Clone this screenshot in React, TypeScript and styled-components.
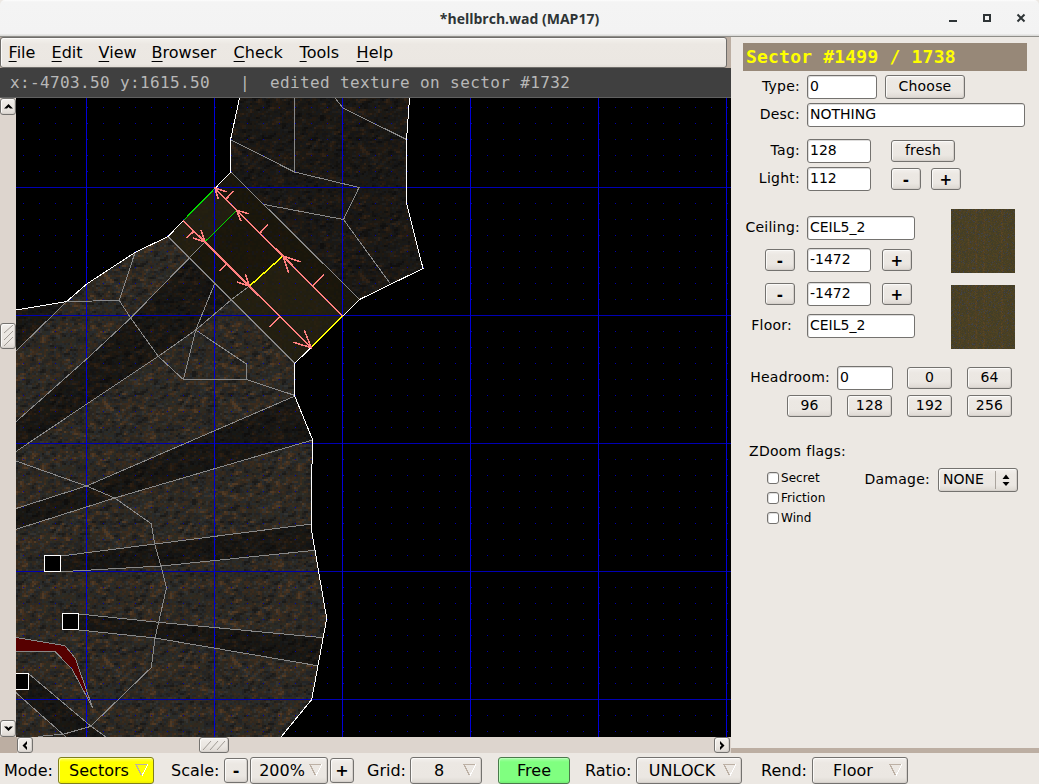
import React from 'react';
import styled, { createGlobalStyle } from 'styled-components';

const GlobalStyle = createGlobalStyle`
  * { box-sizing: border-box; }
  body { margin: 0; background: #ece8e3; overflow: hidden; }
  button, input { font: inherit; color: inherit; }
`;

const SANS = '"DejaVu Sans", sans-serif';
const MONO = '"DejaVu Sans Mono", monospace';

/* ---------- window frame ---------- */

const Window = styled.div`
  width: 1039px;
  height: 784px;
  display: flex;
  flex-direction: column;
  background: #ece8e3;
  color: #000;
  font-family: ${SANS};
`;

const TitleBar = styled.header`
  position: relative;
  height: 37px;
  flex: none;
  display: flex;
  align-items: center;
  justify-content: center;
  background: linear-gradient(#fdfdfd 0, #f4f4f4 2px, #f3f3f3 34px, #dcdcda 35px);
  border: 1px solid #8f8e89;
  border-width: 0 0 1px;
  border-radius: 5px 5px 0 0;
  color: #2e3436;
  font: bold 14px "Open Sans", "Noto Sans", sans-serif;
  padding-top: 1px;
`;

const WindowControls = styled.svg`
  position: absolute;
  right: 10px;
  top: 8px;
`;

const Main = styled.main`
  display: flex;
  height: 716px;
  flex: none;
`;

const Editor = styled.section`
  width: 731px;
  display: flex;
  flex-direction: column;
  background: #bcaea2;
`;

const MenuBar = styled.nav`
  width: 727px;
  height: 31px;
  display: flex;
  align-items: center;
  padding-left: 7.6px;
  font-size: 16px;
  background: linear-gradient(#f4f1ed, #ece8e3 6px, #ebe7e2 26px, #e2ddd7);
  border: 1px solid #6f6d6a;
  border-radius: 3px;
  box-shadow: inset 1px 1px 0 #fbfaf8;
`;

const MenuItem = styled.span<{ $w: number }>`
  width: ${(p) => p.$w}px;
  line-height: 20px;
  &::first-letter {
    text-decoration: underline;
    text-decoration-thickness: 1px;
    text-underline-offset: 3px;
  }
`;

const StatusLine = styled.div`
  height: 30px;
  padding-left: 10px;
  font: 16px/29px ${MONO};
  letter-spacing: 0.37px;
  white-space: pre;
  color: #b8b8b8;
  background: #404040;
  border-bottom: 1px solid #606060;
`;

const MapRow = styled.div`
  display: flex;
  height: 639px;
`;

const bevel = `
  border: 1px solid #74726f;
  border-radius: 3px;
  background: linear-gradient(#f3f0ed, #ece8e3 5px, #ebe7e2 calc(100% - 6px), #ddd8d2);
  box-shadow: inset 1px 1px 0 #fbfaf8, inset -1px -1px 0 #d5d0cb;
`;

const ScrollBar = styled.div<{ $vertical?: boolean }>`
  display: flex;
  flex: ${(p) => (p.$vertical ? 'none' : '1')};
  flex-direction: ${(p) => (p.$vertical ? 'column' : 'row')};
  ${(p) => (p.$vertical ? 'width: 16px;' : 'height: 16px;')}
  background: #ddd5ce;
`;

const ScrollPart = styled.div<{ $w: number; $h: number; $gap?: string }>`
  ${bevel}
  width: ${(p) => p.$w}px;
  height: ${(p) => p.$h}px;
  margin: ${(p) => p.$gap ?? '0'};
  flex: none;
  display: flex;
  align-items: center;
  justify-content: center;
  svg { display: block; }
`;

const HScrollRow = styled.div`
  display: flex;
  padding-left: 17px;
  height: 16px;
`;

/* ---------- side panel ---------- */

const Panel = styled.aside`
  width: 308px;
  height: 716px;
  padding: 6px 12px 0;
  border-bottom: 5px solid #bcaea2;
  font-size: 14px;
`;

const PanelTitle = styled.h1`
  margin: 0;
  height: 28px;
  padding-left: 3px;
  background: #978878;
  color: #ffff00;
  font: bold 18px/27px ${MONO};
  letter-spacing: 0.2px;
`;

const Row = styled.div<{ $top?: number }>`
  display: flex;
  align-items: center;
  height: 24px;
  margin-top: ${(p) => p.$top ?? 4}px;
`;

const Label = styled.label<{ $w: number; $right?: number }>`
  width: ${(p) => p.$w}px;
  margin-right: ${(p) => p.$right ?? 7}px;
  flex: none;
  display: flex;
  justify-content: flex-end;
  white-space: nowrap;
  letter-spacing: 0.25px;
  height: 24px;
  line-height: 22px;
`;

const Field = styled.input<{ $w: number }>`
  width: ${(p) => p.$w}px;
  height: 24px;
  flex: none;
  padding: 0 2px 2px;
  outline: none;
  background: #fff;
  border: 1px solid #74726f;
  border-radius: 3px;
  box-shadow: inset 1px 1px 0 #dedddc;
`;

const Button = styled.button<{ $w: number; $left?: number; $tall?: boolean; $heavy?: boolean }>`
  ${bevel}
  width: ${(p) => p.$w}px;
  height: ${(p) => (p.$tall ? 24 : 22)}px;
  margin-left: ${(p) => p.$left ?? 0}px;
  flex: none;
  padding: 0 0 2px 0;
  line-height: 18px;
  letter-spacing: 0.2px;
  font-weight: ${(p) => (p.$heavy ? 700 : 400)};
  ${(p) => (p.$heavy ? 'font-size: 15px; padding: 1px 0 0;' : '')}
`;

const Surfaces = styled.div`
  display: flex;
  justify-content: space-between;
  margin-top: 18px;
  padding-right: 12px;
`;

const SurfaceFields = styled.div`
  padding-top: 7px;
`;

const Swatches = styled.div`
  display: flex;
  flex-direction: column;
  gap: 12px;
  svg { display: block; }
`;

const Flags = styled.div`
  display: flex;
  margin-top: 4px;
  padding-left: 24px;
`;

const FlagList = styled.div`
  width: 97px;
  font-size: 12px;
  letter-spacing: 0.05px;
`;

const Flag = styled.label`
  display: flex;
  align-items: center;
  gap: 2px;
  height: 20px;
  line-height: 18px;
`;

const CheckBox = styled.span`
  width: 12px;
  height: 12px;
  background: #fff;
  border: 1px solid #74726f;
  border-radius: 3px;
  box-shadow: inset 1px 1px 0 #dedddc;
`;

const Select = styled.div`
  ${bevel}
  width: 80px;
  height: 24px;
  display: flex;
  align-items: center;
  padding: 0 7px 2px 4px;
  justify-content: space-between;
`;

const SelectArrows = styled.span`
  display: flex;
  height: 18px;
  padding-left: 6px;
  border-left: 1px solid #aaa49d;
  margin-top: 2px;
  svg { display: block; }
`;

/* ---------- bottom bar ---------- */

const BottomBar = styled.footer`
  display: flex;
  align-items: center;
  height: 31px;
  flex: none;
  padding: 4px 0 0 4px;
  font-size: 16px;
`;

const BarLabel = styled.span<{ $w: number }>`
  width: ${(p) => p.$w}px;
  flex: none;
  white-space: nowrap;
`;

const BarButton = styled.button<{ $w: number; $right?: number; $tone?: 'yellow' | 'green'; $menu?: boolean; $small?: boolean }>`
  ${bevel}
  position: relative;
  width: ${(p) => p.$w}px;
  height: ${(p) => (p.$small ? 25 : 27)}px;
  margin-right: ${(p) => p.$right ?? 0}px;
  flex: none;
  padding: 0 ${(p) => (p.$menu ? 14 : 0)}px 1px 0;
  font-weight: ${(p) => (p.$small ? 700 : 400)};
  ${(p) => p.$tone === 'yellow' && 'background: linear-gradient(#ffff60, #ffff00 4px, #ffff00 22px, #eeee00); border-color: #80801c; box-shadow: inset 1px 1px 0 #ffff90;'}
  ${(p) => p.$tone === 'green' && 'background: linear-gradient(#a8ffa8, #80ff80 4px, #80ff80 22px, #74ee74); border-color: #4a7a4a; box-shadow: inset 1px 1px 0 #b8ffb8;'}
`;

const Drop = styled.svg`
  position: absolute;
  right: 4px;
  top: 5px;
`;

const DropMark = () => (
  <Drop width="14" height="14" viewBox="0 0 14 14" fill="none" shapeRendering="crispEdges">
    <path d="M6.5 12.5L1 1.5H13" stroke="#bcb0a4" />
    <path d="M13 1.5L7 12.5" stroke="#fff" />
  </Drop>
);

/* ---------- procedural flats ---------- */

function makeRandom(seed: number) {
  let s = seed;
  return () => {
    s = (s + 0x6d2b79f5) | 0;
    let t = Math.imul(s ^ (s >>> 15), 1 | s);
    t = (t + Math.imul(t ^ (t >>> 7), 61 | t)) ^ t;
    return ((t ^ (t >>> 14)) >>> 0) / 4294967296;
  };
}

type Layer = { color: string; d: string };

function toLayers(palette: string[], size: number, pick: (x: number, y: number) => number): Layer[] {
  const cells = palette.map(() => '');
  for (let y = 0; y < size; y++) {
    for (let x = 0; x < size; x++) {
      const i = Math.max(0, Math.min(palette.length - 1, pick(x, y)));
      cells[i] += `M${x} ${y}h1v1h-1z`;
    }
  }
  return palette.map((color, i) => ({ color, d: cells[i] }));
}

const rockLayers = (() => {
  const size = 64;
  const rnd = makeRandom(17);
  const noise = Array.from({ length: size * size }, rnd);
  const hue = Array.from({ length: size * size }, rnd);
  const at = (g: number[], x: number, y: number) => g[((y + size) % size) * size + ((x + size) % size)];
  const palette = ['#1b1a18', '#211f1c', '#232425', '#292520', '#282b2c', '#31281e', '#2c2b23', '#3a2b1d', '#343330', '#44311f', '#503a25'];
  return toLayers(palette, size, (x, y) => {
    const v =
      at(noise, x, y) * 0.34 +
      at(noise, x - 1, y) * 0.24 +
      at(noise, x + 1, y - 1) * 0.16 +
      at(noise, x + 1, y) * 0.14 +
      at(noise, x, y - 1) * 0.12;
    return Math.round((v - 0.5) * 18 + 4.9 + (at(hue, x, y) - 0.5) * 2.4);
  });
})();

const ceilLayers = (() => {
  const rnd = makeRandom(52);
  const palette = ['#3c3c36', '#433e26', '#483f22', '#4b4122', '#4e4424', '#514022', '#5b4624', '#41424a'];
  return toLayers(palette, 64, (x) => {
    const r = rnd();
    const streak = [8, 17, 24, 25, 32, 33, 50, 51].includes(x);
    if (r < 0.06) return 0;
    if (r < 0.13) return 7;
    if (streak && r < 0.75) return r < 0.35 ? 6 : 5;
    return 1 + Math.floor(rnd() * 4.6);
  });
})();

const Texels = ({ layers }: { layers: Layer[] }) => (
  <>
    {layers.map((l) => (
      <path key={l.color} d={l.d} fill={l.color} />
    ))}
  </>
);

const Swatch = () => (
  <svg width="64" height="64" viewBox="0 0 64 64" shapeRendering="crispEdges">
    <Texels layers={ceilLayers} />
  </svg>
);

/* ---------- map view ---------- */

const CAVE = '16,310 66.7,301.5 86.7,284 135,252.5 168,236.5 295,363.5 295.5,395.5 312.5,439.5 311.5,530 326.7,618.5 311.7,699.5 281,737 16,737';
const NORTH_ROOM = '239.5,98 231,140 231,172 359.5,299.5 423,268.5 407,203 406.5,140 409.5,98';
const CORRIDOR = '168,236.5 231,172 359.5,299.5 295,363.5';

const SHADOWS = [
  '16,310 66.7,301.5 16,351',
  '16,421.7 86.7,359 130.7,318 189,258.3 231,300 195.7,330 86.7,404 16,451.5',
  '295,396 86.5,486 16,508.5 16,529.3 114.7,498 312.5,440',
  '61,556 155,544 311.5,524 315,550.3 161,566 61,571.7',
  '79,614 158.7,622.3 323,637.7 317.5,665.7 155,638 79,630',
  '29,674 91,726.3 106,737 66,737 16,692.7',
];

const TWO_SIDED = [
  '294.5,98 294.5,171.7',
  '231,140 294.5,172 359,187.5 343.5,219.5 264,204.5',
  '343.5,219.5 390,283.3',
  '335,98 343,108 407,139.7',
  '231,172 359.5,299.5',
  '168,236.5 295,363.5',
  '205,241.7 189,258.3 130.7,318 86.7,359 16,421.7',
  '249.5,286 231,300 195.7,330 158.3,356.3 86.7,404 16,451.5',
  '214.5,284 195.7,330 183.3,379.5',
  '195.7,330 246.5,364 246.5,379.5 183.3,379.5',
  '246.5,379.5 295,395.5',
  '135,252.5 119.3,300.5 66.7,301.5 16,351',
  '119.3,300.5 130.7,318 158.3,356.3 183.3,379.5',
  '16,461 86.5,486 114.7,498 151.3,523.7 154.7,544 161,566 166.5,588 158.7,622 155,638 151.3,667.5 91,726',
  '295,396 86.5,486 16,508.5',
  '312.5,440 114.7,498 16,529.3',
  '61,556 155,544 311.5,524',
  '61,571.7 161,566 315,550.3',
  '79,614 158.7,622.3 323,637.7',
  '79,630 155,638 317.5,665.7',
  '29,674 91,726.3 106,737',
  '16,692.7 66,737',
  '38,736.5 64,734 91,726.3',
  '16,637.5 65,645.7 75.3,658.3 92.5,707.5 72,669 55,651.5 16,651.5',
];

const WALLS = [
  '16,310 66.7,301.5 86.7,284 135,252.5 168,236.5 183,221',
  '215,188.4 231,172 230.5,140 239.5,98',
  '409.5,98 406.5,140 406.5,203 423,268.5 359.5,299.5 342.5,316.3',
  '311.3,347.4 294.5,363.5 294.5,395.5 312.5,439.5 311.5,490 311.5,530 326.7,618.5 311.7,699.5 281,737',
];

const ARROWS = [
  'M342.5 316L283 256M300.7 262L283 256L288.7 273.3M312.7 285.7L323.7 274.7',
  'M283 256L236.7 210.3M248.7 213.7L236.7 210.3L241 221.3M260 233L268 224.7',
  'M236.7 210.3L215 188M226.7 191.7L215 188L218.3 199.3M226.3 198.7L233.7 191',
  'M183 220.3L205 242M193.3 238L205 242L201 230.3M186.7 238L193.7 231.3',
  'M205 242L249.3 286.3M237.3 282L249.3 286.3L245.3 274.3M226.7 263.7L219.3 271.3',
  'M249.3 286.3L311.3 347.7M293.3 342.3L311.3 347.7L304.3 330.3M279.3 317.3L269.3 327.3',
];

const range = (from: number, to: number, step: number) => {
  const out: number[] = [];
  for (let v = from; v < to; v += step) out.push(v);
  return out;
};

const MapView = () => (
  <svg width="715" height="639" viewBox="16 98 715 639" shapeRendering="crispEdges">
    <defs>
      <pattern id="rock" width="64" height="64" patternUnits="userSpaceOnUse" patternTransform="translate(86 187) scale(2)">
        <Texels layers={rockLayers} />
      </pattern>
      <pattern id="ceil" width="64" height="64" patternUnits="userSpaceOnUse" patternTransform="translate(86 187) scale(2)">
        <Texels layers={ceilLayers} />
      </pattern>
      <pattern id="dots" x="23" y="107" width="16" height="16" patternUnits="userSpaceOnUse">
        <rect width="1" height="1" fill="#0000b0" />
      </pattern>
    </defs>
    <rect x="16" y="98" width="715" height="639" fill="#000" />
    <polygon points={CAVE} fill="url(#rock)" />
    <polygon points={NORTH_ROOM} fill="url(#rock)" />
    <polygon points={NORTH_ROOM} fill="#000" fillOpacity="0.4" />
    {SHADOWS.map((s) => (
      <polygon key={s} points={s} fill="#000" fillOpacity="0.44" />
    ))}
    <polygon points={CORRIDOR} fill="url(#ceil)" />
    <polygon points={CORRIDOR} fill="#050300" fillOpacity="0.68" />
    <polygon points="168,236.5 215,188 237,210 189,258.3" fill="#ffe9a0" fillOpacity="0.04" />
    <polygon points="231,300 249,286 283,256 342.5,316 295,363.5" fill="#ffe9a0" fillOpacity="0.04" />
    <polygon points="16,637.5 65,645.7 75.3,658.3 92.5,707.5 72,669 55,651.5 16,651.5" fill="#560000" />
    <rect x="16" y="98" width="715" height="639" fill="url(#dots)" />
    {range(187, 737, 128).map((y) => (
      <rect key={y} x="16" y={y} width="715" height="1" fill="#0000b4" />
    ))}
    {range(86, 731, 128).map((x) => (
      <rect key={x} x={x} y="98" width="1" height="639" fill="#0000d8" />
    ))}
    <g fill="none" stroke="#888">
      {TWO_SIDED.map((p) => (
        <polyline key={p} points={p} />
      ))}
    </g>
    <g fill="none" stroke="#fff">
      {WALLS.map((p) => (
        <polyline key={p} points={p} />
      ))}
    </g>
    <g fill="#000" stroke="#fff">
      <rect x="44.5" y="555.5" width="16" height="16" />
      <rect x="62.5" y="613.5" width="16" height="16" />
      <path d="M16 673.5H28.5V689.5H16" />
    </g>
    <path d="M183 220.8L215 188.3M205 241.7L237 210" stroke="#00dd00" />
    <path d="M249.5 286L283 256M311.3 347.6L342.5 316.2" stroke="#ffff00" strokeWidth="1.5" />
    <g fill="none" stroke="#ff8080" strokeWidth="1.55">
      {ARROWS.map((d) => (
        <path key={d} d={d} />
      ))}
    </g>
  </svg>
);

const Chevron = ({ d }: { d: string }) => (
  <svg width="9" height="9" viewBox="0 0 9 9">
    <path d={d} fill="#000" />
  </svg>
);

const MENUS: [string, number][] = [
  ['File', 43],
  ['Edit', 47],
  ['View', 53],
  ['Browser', 82],
  ['Check', 66],
  ['Tools', 57],
  ['Help', 60],
];

export default function App() {
  return (
    <Window>
      <GlobalStyle />
      <TitleBar>
        *hellbrch.wad (MAP17)
        <WindowControls width="84" height="20" viewBox="945 8 84 20" fill="none" stroke="#2e3436" strokeWidth="2">
          <path d="M949 21H957" />
          <rect x="984" y="15" width="6" height="6" />
          <path d="M1017.5 14.5L1024.5 21.5M1024.5 14.5L1017.5 21.5" />
        </WindowControls>
      </TitleBar>
      <Main>
        <Editor>
          <MenuBar>
            {MENUS.map(([name, width]) => (
              <MenuItem key={name} $w={width}>{name}</MenuItem>
            ))}
          </MenuBar>
          <StatusLine>{'x:-4703.50 y:1615.50   |  edited texture on sector #1732'}</StatusLine>
          <MapRow>
            <ScrollBar $vertical>
              <ScrollPart $w={16} $h={17}>
                <Chevron d="M4.5 2L9 6.5H6L4.5 5L3 6.5H0Z" />
              </ScrollPart>
              <ScrollPart $w={16} $h={26} $gap="208px 0 371px">
                <svg width="12" height="22" viewBox="0 0 12 22" stroke="#a09b95">
                  <path d="M2 8L11 0M2 15L11 6M2 21L11 12" />
                </svg>
              </ScrollPart>
              <ScrollPart $w={16} $h={17}>
                <Chevron d="M4.5 7L9 2.5H6L4.5 4L3 2.5H0Z" />
              </ScrollPart>
            </ScrollBar>
            <MapView />
          </MapRow>
          <HScrollRow>
            <ScrollBar>
              <ScrollPart $w={16} $h={16}>
                <Chevron d="M1.5 4.5L6 0V3L4.5 4.5L6 6V9Z" />
              </ScrollPart>
              <ScrollPart $w={30} $h={16} $gap="0 485px 0 166px">
                <svg width="24" height="11" viewBox="0 0 24 11" stroke="#a09b95">
                  <path d="M1 10L9 1M8 10L16 1M15 10L23 1" />
                </svg>
              </ScrollPart>
              <ScrollPart $w={16} $h={16}>
                <Chevron d="M6.5 4.5L2 0V3L3.5 4.5L2 6V9Z" />
              </ScrollPart>
            </ScrollBar>
          </HScrollRow>
        </Editor>

        <Panel>
          <PanelTitle>Sector #1499 / 1738</PanelTitle>
          <Row>
            <Label $w={57}>Type:</Label>
            <Field $w={70} defaultValue="0" />
            <Button $w={80} $left={8} $tall>Choose</Button>
          </Row>
          <Row>
            <Label $w={57}>Desc:</Label>
            <Field $w={218} defaultValue="NOTHING" />
          </Row>
          <Row $top={12}>
            <Label $w={57}>Tag:</Label>
            <Field $w={64} defaultValue="128" />
            <Button $w={64} $left={20}>fresh</Button>
          </Row>
          <Row>
            <Label $w={57}>Light:</Label>
            <Field $w={64} defaultValue="112" />
            <Button $w={30} $left={20} $heavy>-</Button>
            <Button $w={30} $left={10} $heavy>+</Button>
          </Row>

          <Surfaces>
            <SurfaceFields>
              <Row $top={0}>
                <Label $w={57}>Ceiling:</Label>
                <Field $w={108} defaultValue="CEIL5_2" />
              </Row>
              <Row $top={8}>
                <Button $w={30} $left={22} $heavy>-</Button>
                <Label $w={12} $right={0} />
                <Field $w={64} defaultValue="-1472" />
                <Button $w={30} $left={11} $heavy>+</Button>
              </Row>
              <Row $top={10}>
                <Button $w={30} $left={22} $heavy>-</Button>
                <Label $w={12} $right={0} />
                <Field $w={64} defaultValue="-1472" />
                <Button $w={30} $left={11} $heavy>+</Button>
              </Row>
              <Row $top={8}>
                <Label $w={49} $right={15}>Floor:</Label>
                <Field $w={108} defaultValue="CEIL5_2" />
              </Row>
            </SurfaceFields>
            <Swatches>
              <Swatch />
              <Swatch />
            </Swatches>
          </Surfaces>

          <Row $top={17}>
            <Label $w={87}>Headroom:</Label>
            <Field $w={56} defaultValue="0" />
            <Button $w={45} $left={14}>0</Button>
            <Button $w={45} $left={15}>64</Button>
          </Row>
          <Row>
            <Button $w={45} $left={44}>96</Button>
            <Button $w={45} $left={15}>128</Button>
            <Button $w={45} $left={15}>192</Button>
            <Button $w={45} $left={15}>256</Button>
          </Row>

          <Row $top={22}>
            <Label $w={103}>ZDoom flags:</Label>
          </Row>
          <Flags>
            <FlagList>
              {['Secret', 'Friction', 'Wind'].map((f) => (
                <Flag key={f}>
                  <CheckBox />
                  {f}
                </Flag>
              ))}
            </FlagList>
            <Label $w={66} $right={8}>Damage:</Label>
            <Select>
              NONE
              <SelectArrows>
                <svg width="8" height="18" viewBox="0 0 8 18">
                  <path d="M4 3.5L7.5 8H0.5ZM0.5 11H7.5L4 15Z" fill="#000" />
                </svg>
              </SelectArrows>
            </Select>
          </Flags>
        </Panel>
      </Main>

      <BottomBar>
        <BarLabel $w={54}>Mode:</BarLabel>
        <BarButton $w={96} $right={17} $tone="yellow" $menu>Sectors<DropMark /></BarButton>
        <BarLabel $w={53}>Scale:</BarLabel>
        <BarButton $w={24} $right={2} $small>-</BarButton>
        <BarButton $w={78} $right={2} $menu>200%<DropMark /></BarButton>
        <BarButton $w={24} $right={13} $small>+</BarButton>
        <BarLabel $w={43}>Grid:</BarLabel>
        <BarButton $w={72} $right={16} $menu>8<DropMark /></BarButton>
        <BarButton $w={72} $right={15} $tone="green">Free</BarButton>
        <BarLabel $w={51}>Ratio:</BarLabel>
        <BarButton $w={106} $right={19} $menu>UNLOCK<DropMark /></BarButton>
        <BarLabel $w={51}>Rend:</BarLabel>
        <BarButton $w={96} $menu>Floor<DropMark /></BarButton>
      </BottomBar>
    </Window>
  );
}
